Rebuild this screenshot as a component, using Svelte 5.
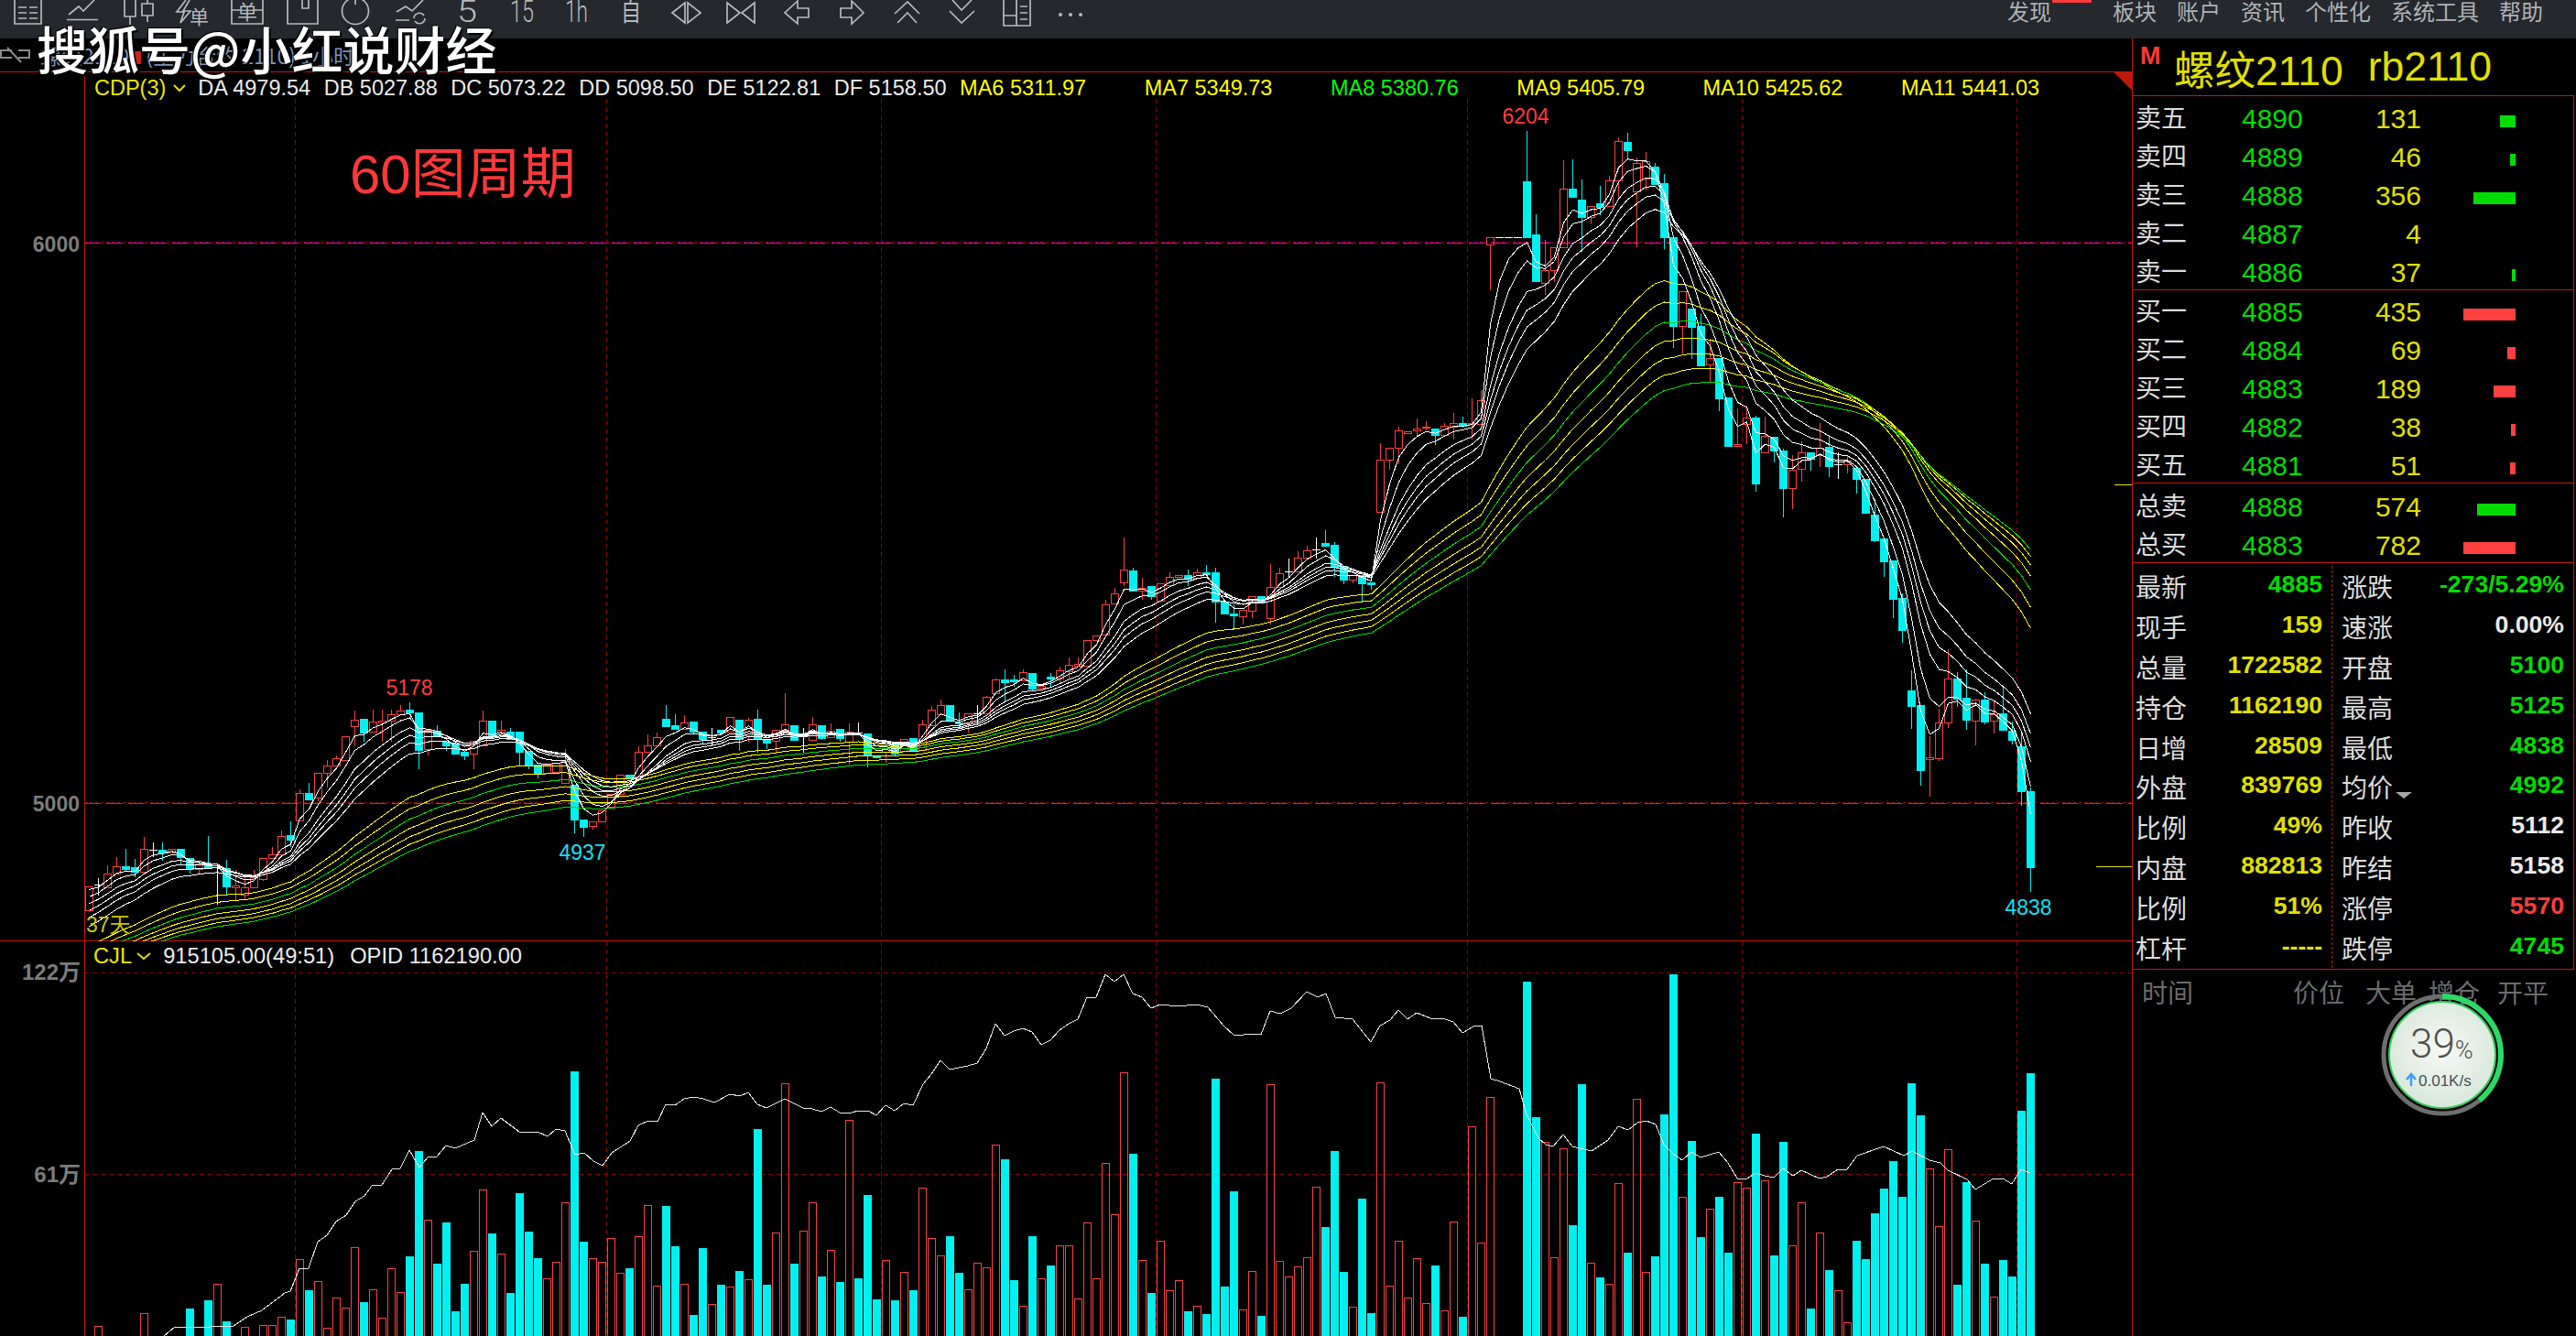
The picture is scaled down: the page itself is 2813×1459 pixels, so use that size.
<script>
  const R = 'r', C = 'c', W = 'w';

  // candles as pixel rows: [kind, bodyTop, bodyBottom, wickTop, wickBottom]
  const candles = [
    [R,968,994,0,996],[W,966,966,959,978],[R,954,969,945,970],[R,946,954,936],[C,946,949,927,952],[C,947,952,938,958],[R,927,952,914,955],[W,928,928,920,936],[C,928,931,920,940],[R,927,931],
    [C,927,936,0,945],[C,937,949,0,954],[R,943,949,0,955],[C,943,947,913],[W,947,947,945,988],[C,948,968,939,977],[R,967,969,950,983],[R,969,977,955,983],[R,958,969,950],[R,937,960,0,962],
    [R,933,937,925],[R,913,933,907],[C,912,917,897,925],[R,866,896,862],[C,866,873,855],[R,844,871,0,875],[R,836,844,830,860],[R,828,836,825],[R,804,830],[R,786,793,776,815],
    [C,785,800,0,810],[R,788,799,775],[R,787,789,775,810],[R,780,787,775,810],[R,776,780,770],[C,775,778,767],[C,778,819,0,840],[R,797,818,0,825],[C,798,804,792],[C,810,814,0,820],
    [C,812,823],[C,821,825,0,830],[R,809,823,0,840],[R,787,814,776],[C,787,804],[R,797,800,787],[C,799,807,795],[C,799,821,0,836],[C,820,835,0,840],[C,835,844,0,850],
    [R,835,844],[R,833,843],[R,831,855,818],[C,857,895,0,910],[C,895,903,0,914],[R,897,902,0,906],[R,885,897],[R,867,881],[R,846,867],[C,846,850],
    [R,821,848,815],[R,814,821,802],[R,805,814,800],[C,785,793,770],[C,792,796,780],[R,789,796,781],[C,788,799],[C,799,807,0,812],[W,805,805,795,815],[C,797,800],
    [R,783,799],[C,786,807,0,820],[R,786,803,784,810],[C,785,807,775,822],[C,807,811,0,818],[R,797,809,0,823],[R,791,797,757,800],[C,792,808],[W,803,803,795,822],[R,791,808,783],
    [C,792,806,0,808],[R,798,805,790],[C,796,806,0,810],[R,799,810,790,835],[W,800,800,789,802],[C,801,825,0,838],[C,826,827],[R,817,821,0,833],[C,813,823,0,826],[R,807,820],
    [C,806,820],[R,791,819,786],[R,775,792,771],[R,770,780,764],[C,770,787],[C,789,790,778,795],[R,779,790,0,800],[W,779,779,770,790],[R,761,779,760],[R,742,757,741],
    [C,742,745,731,767],[C,742,744,737,750],[R,734,743,731],[C,735,752,0,755],[R,749,751],[C,739,741,735,750],[R,732,741,728,745],[R,726,733,718,740],[R,725,727,718],[R,699,727],
    [R,694,699],[R,660,693,655],[R,648,659,642],[R,622,636,587,640],[C,623,645,620],[R,642,645,631,655],[C,640,651,0,655],[R,637,656],[R,630,639,625],[R,628,630],
    [C,628,632,622,640],[R,625,631,621],[C,625,627,617],[C,625,657,620,680],[C,657,670],[C,670,672,660,688],[R,666,673,0,682],[R,651,667,0,675],[C,651,658],[R,641,675,616,682],
    [R,626,641,620],[W,624,624,610,630],[R,609,624,602],[R,601,609,596],[W,600,600,587,610],[C,593,596,579],[C,595,619,592,630],[C,618,633,0,638],[R,628,633,0,637],[C,628,637,0,658],
    [C,636,638,0,644],[R,502,559,484],[R,489,502,0,513],[R,470,489,466,507],[R,471,473],[R,468,470,457,476],[R,466,467,460,470],[C,468,475,0,486],[R,465,475,462],[R,462,466,451,480],
    [C,462,465,455,467],[R,462,463,435,480],[R,437,463,427],[R,259,267,0,317],[W,259,259],[W,259,259],[W,259,259],[C,198,259,143],[C,256,307,234],[R,295,309,262,322],
    [R,270,295,0,308],[R,206,270,175],[C,206,215,174],[C,218,237,196,275],[R,225,237,0,245],[C,222,226,203,235],[R,197,225,192],[R,154,197,150,215],[C,155,164,145,175],[R,178,209,172,270],
    [R,176,195,166,208],[C,182,201,178],[C,200,259,190,272],[C,259,356,0,380],[R,318,356,0,386],[C,337,357,0,392],[C,356,399,343],[R,391,398,370,417],[C,391,435,0,449],[C,434,487],
    [R,485,487,446],[R,456,463,443,485],[C,456,528,454,537],[R,476,494,455],[C,477,492,0,505],[C,492,533,490,565],[R,513,533,497,556],[R,494,512,482,526],[C,494,501,0,514],[R,489,497,462,510],
    [C,488,509,475,521],[W,507,507,494,523],[R,503,507,498,517],[C,511,523,0,539],[C,523,560],[C,562,590,545,592],[C,588,613,0,630],[C,612,654,0,675],[C,653,688,648,702],[C,754,771,732,796],
    [C,770,841,0,858],[R,827,829,804,870],[R,789,828,774,831],[R,741,789,709,795],[C,741,763,734,772],[C,762,786,731,797],[R,764,787,763,814],[C,764,788,756,791],[R,780,787,765,801],[C,779,797,751],
    [C,798,808,788,813],[C,815,864,800,880],[C,864,947,860,974]
  ];

  // volume bar tops by index, 0 when the bar falls below the crop
  const volTops = [
    0,1448,0,0,0,0,1434,0,0,0,0,1429,0,1420,1402,1443,0,1449,0,1447,
    1447,1438,1441,1375,1409,1399,1450,1417,1428,1362,1422,1408,1439,1385,1411,1372,1257,1332,1380,1335,
    1432,1402,1366,1299,1347,1369,1412,1303,1345,1374,1396,1378,1313,1170,1356,1374,1378,1352,1390,1385,
    1350,1316,1404,1317,1361,1402,1436,1363,1424,1403,1405,1388,1397,1233,1403,1346,1183,1380,1344,1313,
    1394,1365,1400,1223,1396,1305,1419,1376,1420,1389,1409,1297,1352,1371,1350,1390,1408,1379,1384,1250,
    1266,1398,1426,1350,1396,1382,1360,1360,1418,1335,1396,1270,1326,1171,1260,1376,1412,1355,1409,1398,
    1432,1426,1435,1178,1405,1301,1430,1388,1437,1184,1377,1394,1383,1373,1296,1340,1257,1389,1427,1309,
    1434,1182,1404,1355,1417,1374,1423,1382,1431,1334,1438,1230,1357,1198,0,0,0,1072,1220,1247,
    1373,1254,1338,1184,1379,1395,1402,1292,1368,1200,1389,1372,1217,1064,1307,1246,1351,1320,1307,1368,
    1291,1297,1238,1289,1371,1247,1360,1313,1429,1346,1387,1409,1444,1355,1375,1325,1298,1268,1307,1183,
    1218,1276,1339,1255,1403,1291,1333,1380,1416,1376,1394,1213,1172
  ];
  // indexes of the hollow red volume bars
  const volRed = new Set([1,6,14,17,19,20,21,23,25,26,27,28,29,31,32,33,34,37,42,43,45,50,51,52,55,56,57,58,60,61,62,65,68,70,72,75,76,78,79,81,83,87,89,91,92,93,96,97,98,99,102,104,106,107,108,109,110,111,112,113,115,117,118,119,121,126,127,129,130,131,132,133,134,138,141,142,143,144,145,146,148,149,151,152,153,159,160,161,164,166,167,169,170,174,177,180,181,183,186,187,189,191,192,201,202,203,206,208]);

  const obv = [
    [179,1459],[191,1449],[204,1450],[255,1448],[270,1438],[286,1431],[311,1412],[317,1410],[327,1385],[337,1385],[347,1356],[357,1349],[367,1334],[378,1327],[388,1312],[398,1306],[406,1295],[417,1294],[428,1277],[437,1276],[447,1256],[458,1275],[467,1264],[477,1263],[487,1251],[497,1254],[518,1245],[527,1215],[537,1230],[547,1221],[567,1236],[587,1236],[598,1241],[607,1233],[617,1235],[628,1261],[638,1259],[648,1268],[658,1273],[668,1259],[688,1246],[697,1229],[708,1224],[718,1225],[727,1206],[737,1207],[747,1200],[758,1198],[768,1200],[780,1204],
    [797,1195],[808,1197],[817,1193],[827,1206],[837,1210],[857,1200],[877,1210],[887,1211],[897,1214],[907,1209],[917,1215],[930,1215],[937,1213],[948,1213],[957,1218],[967,1207],[977,1213],[987,1205],[997,1207],[1008,1184],[1017,1173],[1027,1158],[1037,1168],[1047,1166],[1057,1164],[1067,1161],[1077,1145],[1087,1118],[1097,1131],[1107,1126],[1117,1123],[1127,1127],[1137,1141],[1147,1136],[1157,1125],[1167,1118],[1177,1113],[1187,1089],[1197,1089],[1207,1064],[1217,1072],[1227,1064],[1237,1085],[1247,1089],[1257,1101],[1267,1097],
    [1286,1099],[1307,1097],[1319,1100],[1336,1120],[1348,1131],[1369,1129],[1377,1130],[1387,1104],[1398,1107],[1410,1101],[1427,1083],[1439,1089],[1448,1085],[1458,1111],[1477,1113],[1497,1138],[1507,1120],[1518,1114],[1527,1103],[1537,1113],[1547,1106],[1562,1112],[1578,1113],[1587,1116],[1597,1128],[1609,1121],[1618,1120],[1628,1178],[1638,1181],[1659,1189],[1667,1217],[1680,1243],[1688,1250],[1696,1252],[1707,1239],[1717,1252],[1738,1257],[1756,1245],[1767,1230],[1778,1234],[1788,1226],[1798,1224],[1808,1228],[1817,1250],[1827,1260],[1837,1267],[1847,1258],[1857,1264],[1877,1258],[1887,1270],[1897,1287],[1908,1287],[1917,1281],[1927,1284],[1937,1286],[1947,1276],[1958,1284],[1967,1278],[1987,1287],[1995,1285],[2007,1277],[2017,1277],[2028,1262],[2057,1252],[2079,1262],[2088,1257],[2107,1267],[2119,1270],[2127,1278],[2148,1288],[2157,1299],[2177,1287],[2187,1287],[2197,1293],[2207,1277],[2217,1281]
  ];

  const xAt = (k) => 97.5 + 10 * k;
  const closes = candles.map((c) => (c[0] === C ? c[2] : c[1]));

  function ema(period, seed) {
    const a = 2 / (period + 1);
    let v = seed;
    return closes.map((close, k) => {
      v += a * (close - v);
      return `${xAt(k)},${v.toFixed(1)}`;
    }).join(' ');
  }

  const fastLines = [[3,975],[5,985],[8,992],[10,1000],[12,1008],[15,1018]].map(([p, s]) => ema(p, s));
  const slowLines = [
    [30,1037,'#ffff00'],[35,1042,'#ffff00'],[40,1046,'#00e000'],[45,1049,'#ffff00'],
    [50,1052,'#ffff00'],[55,1054,'#ffff00'],[60,1056,'#00e000']
  ].map(([p, s, color]) => ({ points: ema(p, s), color }));

  const grid = [322, 662, 962, 1262, 1602, 1902, 2202];

  const legend = [
    ['DA', '4979.54'], ['DB', '5027.88'], ['DC', '5073.22'],
    ['DD', '5098.50'], ['DE', '5122.81'], ['DF', '5158.50']
  ];
  const maLegend = [
    ['MA6 5311.97', 'yel'], ['MA7 5349.73', 'yel'], ['MA8 5380.76', 'lime'],
    ['MA9 5405.79', 'yel'], ['MA10 5425.62', 'yel'], ['MA11 5441.03', 'yel']
  ];

  const menu = ['板块', '账户', '资讯', '个性化', '系统工具', '帮助'];

  const asks = [['卖五',4890,131],['卖四',4889,46],['卖三',4888,356],['卖二',4887,4],['卖一',4886,37]];
  const bids = [['买一',4885,435],['买二',4884,69],['买三',4883,189],['买四',4882,38],['买五',4881,51]];
  const totals = [['总卖',4888,574,'ask'],['总买',4883,782,'bid']];
  const barWidth = (qty) => Math.floor(qty * 0.132);

  const statsLeft = [
    ['最新','4885','grn'],['现手','159','ylw'],['总量','1722582','ylw'],['持仓','1162190','ylw'],['日增','28509','ylw'],
    ['外盘','839769','ylw'],['比例','49%','ylw'],['内盘','882813','ylw'],['比例','51%','ylw'],['杠杆','-----','ylw']
  ];
  const statsRight = [
    ['涨跌','-273/5.29%','grn'],['速涨','0.00%','wht'],['开盘','5100','grn'],['最高','5125','grn'],['最低','4838','grn'],
    ['均价','4992','grn',true],['昨收','5112','wht'],['昨结','5158','wht'],['涨停','5570','red'],['跌停','4745','grn']
  ];
</script>

<div class="app">
  <header class="toolbar">
    <svg class="tools" width="1200" height="42" viewBox="0 0 1200 42">
      <g class="tool-line">
        <path d="M16-2V26H45V-2M20 8h9M32 8h9M20 14h9M32 14h9M20 20h9M32 20h9" />
        <path d="M73 21.5H107M75 16L86 7L91 12L103 0" />
        <path d="M136-2H148V18H136ZM142 18V27M155 4H167V17H155ZM161 0V4M161 17V24" />
        <path d="M203 0L193 13H201L197 25L208 12H200L207 0" />
        <path d="M253-2V26H287V-2M253 11H262M278 11H287" />
        <path d="M314-2V26H347V-2M330-2V9H337V-2" />
        <circle cx="388" cy="12" r="14.5" />
        <path d="M388-2V5" />
        <path d="M433 13L443 7L450 12L462 0M432 22H447" />
        <path d="M452 20A6 6 0 0 1 463 17M464 20A6 6 0 0 1 453 23" />
        <path d="M734 14L748 3V25ZM765 14L751 3V25Z" />
        <path d="M794 3L808 14L794 25ZM824 3L810 14L824 25Z" />
        <path d="M871 1L857 14L871 26V19H883V9H871Z" />
        <path d="M930 1L943 14L930 26V19H918V9H930Z" />
        <path d="M977 15L991 2L1004 15M980 25L991 14L1001 25" />
        <path d="M1040 0L1050 11L1061 0M1037 12L1050 25L1064 12" />
        <path d="M1096-2H1125V28H1096ZM1110-2V28M1096 17H1110M1114 7H1122M1114 14H1122M1114 21H1122" />
      </g>
      <g class="tool-fill">
        <circle cx="1158" cy="16" r="2" /><circle cx="1169" cy="16" r="2" /><circle cx="1180" cy="16" r="2" />
      </g>
      <text class="tool-cjk" x="207" y="26" font-size="21">单</text>
      <text class="tool-cjk" x="259" y="21" font-size="22">单</text>
      <text class="tool-num" x="499" y="24" font-size="33" textLength="22" lengthAdjust="spacingAndGlyphs">5</text>
      <text class="tool-num" x="557" y="24" font-size="33" textLength="26" lengthAdjust="spacingAndGlyphs">15</text>
      <text class="tool-num" x="617" y="24" font-size="33" textLength="25" lengthAdjust="spacingAndGlyphs">1h</text>
      <text class="tool-cjk" x="678" y="23" font-size="27" textLength="22" lengthAdjust="spacingAndGlyphs">自</text>
    </svg>
    <nav class="menu">
      <span class="menu-flag">发现<i class="flag"></i></span>
      {#each menu as item}
        <span>{item}</span>
      {/each}
    </nav>
  </header>

  <div class="body">
    <main class="chart">
      <div class="strip">
        <svg width="34" height="20" viewBox="0 0 34 20" class="strip-icon">
          <path d="M13 5H1V13H13M20 5H32V13H20M8 2L23 18" />
        </svg>
        <span class="strip-title">螺纹2110 <i class="strip-tick"></i> (主力合约 2110) 1小时</span>
      </div>

      <section class="price-pane">
        <svg class="plot" width="2328" height="949" viewBox="0 79 2328 949">
          {#each grid as x}
            <line class="grid" x1={x + 0.5} x2={x + 0.5} y1="108" y2="1028" />
          {/each}
          <line class="grid-dot" x1="92" x2="2328" y1="264.5" y2="264.5" />
          <line class="grid-dot" x1="92" x2="2328" y1="876.5" y2="876.5" />
          <line class="magenta" x1="92" x2="2328" y1="265.5" y2="265.5" />
          <line class="magenta" x1="92" x2="2328" y1="877.5" y2="877.5" />
          <line class="axis" x1="92.5" x2="92.5" y1="79" y2="1028" />
          <line class="mark" x1="2309" x2="2328" y1="529.5" y2="529.5" />
          <line class="mark" x1="2289" x2="2328" y1="946.5" y2="946.5" />
          <polygon class="corner" points="2308,79 2328,79 2328,99" />

          {#each candles as [kind, top, bot, hi, lo], k}
            {@const x = xAt(k)}
            {#if kind === R}
              <g class="up">
                <line x1={x} x2={x} y1={hi || top} y2={top} />
                <line x1={x} x2={x} y1={bot} y2={lo || bot} />
                <rect x={x - 4} y={top + 0.5} width="8" height={bot - top} />
              </g>
            {:else if kind === C}
              <line class="down-wick" x1={x} x2={x} y1={hi || top} y2={lo || bot} />
              <rect class="down" x={x - 4.5} y={top} width="9" height={bot - top + 1} />
            {:else}
              <g class="doji">
                <line x1={x} x2={x} y1={hi || top} y2={lo || top} />
                <line x1={x - 4.5} x2={x + 4.5} y1={top + 0.5} y2={top + 0.5} />
              </g>
            {/if}
          {/each}

          {#each slowLines as line}
            <polyline class="ma" points={line.points} stroke={line.color} />
          {/each}
          {#each fastLines as points}
            <polyline class="ma fast" {points} />
          {/each}

          <text class="axis-label" x="87" y="275" text-anchor="end">6000</text>
          <text class="axis-label" x="87" y="885.5" text-anchor="end">5000</text>
          <text class="peak hot" x="1666" y="135">6204</text>
          <text class="peak hot" x="447" y="759">5178</text>
          <text class="peak cold" x="636" y="939">4937</text>
          <text class="peak cold" x="2215" y="999">4838</text>
          <text class="peak days" x="94" y="1018">37天</text>
          <text class="period" x="382" y="211">60图周期</text>
        </svg>

        <div class="legend">
          <span class="legend-name yel">CDP(3)</span>
          <svg class="chev" width="14" height="10" viewBox="0 0 14 10"><path d="M1 2L7 8L13 2" /></svg>
          {#each legend as [name, value]}
            <span class="legend-item">{name} {value}</span>
          {/each}
          {#each maLegend as [text, color]}
            <span class="legend-ma {color}">{text}</span>
          {/each}
        </div>
      </section>

      <section class="volume-pane">
        <svg class="plot" width="2328" height="431" viewBox="0 1028 2328 431">
          {#each grid as x}
            <line class="grid" x1={x + 0.5} x2={x + 0.5} y1="1028" y2="1459" />
          {/each}
          <line class="grid" x1="92" x2="2328" y1="1062.5" y2="1062.5" />
          <line class="grid" x1="92" x2="2328" y1="1282.5" y2="1282.5" />
          <line class="axis" x1="92.5" x2="92.5" y1="1028" y2="1459" />

          {#each volTops as top, k}
            {#if top}
              {#if volRed.has(k)}
                <rect class="vol-up" x={xAt(k) - 4} y={top + 0.5} width="8" height={1465 - top} />
              {:else}
                <rect class="down" x={xAt(k) - 4.5} y={top} width="9" height={1459 - top} />
              {/if}
            {/if}
          {/each}

          <polyline class="obv" points={obv.map((p) => p.join(',')).join(' ')} />

          <text class="axis-label small" x="88" y="1070" text-anchor="end">122万</text>
          <text class="axis-label small" x="88" y="1291" text-anchor="end">61万</text>
        </svg>

        <div class="legend vol-legend">
          <span class="legend-name yel">CJL</span>
          <svg class="chev" width="16" height="10" viewBox="0 0 16 10"><path d="M1 2L8 8L15 2" /></svg>
          <span class="legend-item first">915105.00(49:51)</span>
          <span class="legend-item">OPID 1162190.00</span>
        </div>
      </section>
    </main>

    <aside class="side">
      <div class="quote-title">
        <span class="m">M</span>
        <span>螺纹2110</span>
        <span>rb2110</span>
      </div>

      <div class="box">
        <div class="book first">
          {#each asks as [label, price, qty]}
            <div class="book-row">
              <span class="label">{label}</span><span class="price">{price}</span><span class="qty">{qty}</span>
              <span class="bar-cell"><i class="bar ask" style="width:{barWidth(qty)}px"></i></span>
            </div>
          {/each}
        </div>
        <div class="book">
          {#each bids as [label, price, qty]}
            <div class="book-row">
              <span class="label">{label}</span><span class="price">{price}</span><span class="qty">{qty}</span>
              <span class="bar-cell"><i class="bar bid" style="width:{barWidth(qty)}px"></i></span>
            </div>
          {/each}
        </div>
        <div class="book totals">
          {#each totals as [label, price, qty, side]}
            <div class="book-row">
              <span class="label">{label}</span><span class="price">{price}</span><span class="qty">{qty}</span>
              <span class="bar-cell"><i class="bar {side}" style="width:{qty * 0.0725}px"></i></span>
            </div>
          {/each}
        </div>

        <div class="stats">
          <div class="stat-col left">
            {#each statsLeft as [label, value, color]}
              <div class="stat-row"><span class="label">{label}</span><b class={color}>{value}</b></div>
            {/each}
          </div>
          <div class="stat-col">
            {#each statsRight as [label, value, color, caret]}
              <div class="stat-row">
                <span class="label">{label}{#if caret}<i class="caret"></i>{/if}</span><b class={color}>{value}</b>
              </div>
            {/each}
          </div>
        </div>
      </div>

      <div class="ticks">
        <div class="tick-head">
          <span class="t-time">时间</span><span class="t-price">价位</span><span class="t-big">大单</span><span class="t-add">增仓</span><span class="t-open">开平</span>
        </div>
        <svg class="speed" width="136" height="136" viewBox="0 0 136 136">
          <defs>
            <radialGradient id="face" cx="50%" cy="45%" r="55%">
              <stop offset="0%" stop-color="#f6f8f6" />
              <stop offset="100%" stop-color="#d9e8da" />
            </radialGradient>
          </defs>
          <circle cx="68" cy="68" r="64" class="speed-track" />
          <circle cx="68" cy="68" r="64" class="speed-arc" stroke-dasharray="157 402" transform="rotate(-90 68 68)" />
          <circle cx="68" cy="68" r="58" class="speed-face" fill="url(#face)" />
          <text class="speed-num" x="33" y="71">39<tspan font-size="27" dy="1">%</tspan></text>
          <path class="speed-up" d="M34 102V90M29 95L34 89L39 95" />
          <text class="speed-rate" x="42" y="102">0.01K/s</text>
        </svg>
      </div>
    </aside>
  </div>

  <div class="watermark">搜狐号@小红说财经</div>
</div>

<style>
  :global(body) {
    margin: 0;
    background: #000;
  }

  .app {
    position: relative;
    width: 2813px;
    height: 1459px;
    background: #000;
    overflow: hidden;
    display: flex;
    flex-direction: column;
    font-family: "Liberation Sans", "Noto Sans CJK SC", sans-serif;
  }

  i {
    display: inline-block;
    font-style: normal;
  }

  /* toolbar */
  .toolbar {
    height: 42px;
    flex-shrink: 0;
    background: #25282d;
    display: flex;
    justify-content: space-between;
    overflow: hidden;
  }

  .tools {
    display: block;
  }

  .tool-line path,
  .tool-line circle {
    fill: none;
    stroke: #b6babd;
    stroke-width: 1.7;
  }

  .tool-fill {
    fill: #b6babd;
  }

  .tool-cjk {
    font-family: "Noto Sans CJK SC", sans-serif;
    fill: #b6babd;
  }

  .tool-num {
    font-family: Roboto, sans-serif;
    font-weight: 300;
    fill: #b6babd;
  }

  .menu {
    display: flex;
    gap: 22px;
    padding-right: 36px;
    font: 24px/24px "Noto Sans CJK SC", sans-serif;
    color: #aeb2b6;
  }

  .menu-flag {
    position: relative;
    margin-right: 45px;
  }

  .flag {
    position: absolute;
    left: 49px;
    top: 0;
    width: 43px;
    height: 3px;
    background: #ff3a3a;
  }

  .body {
    flex: 1;
    display: flex;
    min-height: 0;
  }

  /* chart column */
  .chart {
    width: 2328px;
    flex-shrink: 0;
    display: flex;
    flex-direction: column;
  }

  .strip {
    height: 36px;
    flex-shrink: 0;
    display: flex;
    align-items: center;
    gap: 10px;
    border-bottom: 1.5px solid #c8160c;
  }

  .strip-icon path {
    fill: none;
    stroke: #8b8b8b;
    stroke-width: 2;
  }

  .strip-icon {
    flex-shrink: 0;
  }

  .strip-title {
    font: 23px "Noto Sans CJK SC", sans-serif;
    color: #7f93b4;
    white-space: nowrap;
  }

  .strip-tick {
    width: 8px;
    height: 14px;
    background: #d02020;
  }

  .price-pane,
  .volume-pane {
    position: relative;
  }

  .price-pane {
    height: 949px;
    border-bottom: 1.5px solid #c8160c;
    box-sizing: border-box;
    flex-shrink: 0;
  }

  .volume-pane {
    flex: 1;
    min-height: 0;
  }

  .plot {
    display: block;
    shape-rendering: crispEdges;
  }

  .grid {
    stroke: #8a0000;
    stroke-width: 1;
    stroke-dasharray: 5 4;
  }

  .grid-dot {
    stroke: #9a0000;
    stroke-width: 1;
    stroke-dasharray: 3 3;
  }

  .magenta {
    stroke: #e000e0;
    stroke-width: 1;
    stroke-dasharray: 18 6;
  }

  .axis {
    stroke: #c8160c;
    stroke-width: 1;
  }

  .mark {
    stroke: #e0e000;
    stroke-width: 1;
  }

  .corner {
    fill: #c01808;
  }

  .up line {
    stroke: #ff4040;
    stroke-width: 1;
  }

  .up rect,
  .vol-up {
    fill: none;
    stroke: #ff4040;
    stroke-width: 1;
  }

  .down-wick {
    stroke: #00f0f0;
    stroke-width: 1;
  }

  .down {
    fill: #00f0f0;
  }

  .doji line {
    stroke: #fff;
    stroke-width: 1;
  }

  .ma {
    fill: none;
    stroke-width: 1;
  }

  .fast {
    stroke: #fff;
  }

  .obv {
    fill: none;
    stroke: #e8e8e8;
    stroke-width: 1;
  }

  .axis-label {
    font: bold 23px "Liberation Sans", sans-serif;
    fill: #7c7c7c;
  }

  .axis-label.small {
    font: bold 24px "Liberation Sans", "Noto Sans CJK SC", sans-serif;
  }

  .peak {
    font: 23px "Liberation Sans", "Noto Sans CJK SC", sans-serif;
    text-anchor: middle;
  }

  .hot {
    fill: #ff3c3c;
  }

  .cold {
    fill: #12e0f4;
  }

  .days {
    fill: #c8c800;
    text-anchor: start;
  }

  .period {
    font: 60px "Liberation Sans", "Noto Sans CJK SC", sans-serif;
    fill: #ff3838;
  }

  .legend {
    position: absolute;
    left: 103px;
    top: -1px;
    height: 36px;
    display: flex;
    align-items: center;
    font-size: 23.5px;
    white-space: nowrap;
  }

  .vol-legend {
    left: 102px;
    top: -1px;
    height: 34px;
    font-size: 23.7px;
  }

  .legend-name {
    margin-right: 8px;
  }

  .vol-legend .legend-name {
    margin-right: 5px;
  }

  .chev {
    fill: none;
    stroke: #e0e000;
    stroke-width: 2;
    margin-right: 13px;
  }

  .legend-item {
    color: #ececec;
    margin-right: 14.5px;
  }

  .legend-item.first {
    margin-right: 17px;
  }

  .legend-ma {
    margin-right: 63.5px;
  }

  .yel {
    color: #e8e800;
  }

  .legend-ma.yel {
    color: #ffff00;
  }

  .lime {
    color: #00ff00;
  }

  /* quote panel */
  .side {
    width: 485px;
    flex-shrink: 0;
    box-sizing: border-box;
    display: flex;
    flex-direction: column;
    border-left: 1.5px solid #c8160c;
  }

  .quote-title {
    height: 62px;
    flex-shrink: 0;
    display: flex;
    align-items: center;
    gap: 27px;
    padding-left: 45px;
    position: relative;
    font-size: 44.5px;
    color: #e0e000;
  }

  .m {
    position: absolute;
    left: 8px;
    top: 4px;
    font-size: 27px;
    font-weight: bold;
    color: #ff3838;
  }

  .box {
    margin-right: 2px;
    border-top: 1.5px solid #c8160c;
    border-right: 1.5px solid #c8160c;
    flex-shrink: 0;
  }

  .book {
    border-bottom: 1.5px solid #c8160c;
  }

  .book.first {
    padding-top: 1px;
  }

  .book.totals {
    padding-top: 2px;
  }

  .book-row {
    height: 42px;
    display: grid;
    grid-template-columns: 116px 100px 96px 103px;
    align-items: center;
    padding-left: 3px;
  }

  .label {
    font: 28px/1 "Noto Sans CJK SC", sans-serif;
    color: #dcdcdc;
    white-space: nowrap;
  }

  .price {
    font-size: 30px;
    color: #00dc00;
    padding-top: 5px;
  }

  .qty {
    font-size: 30px;
    color: #e0e000;
    text-align: right;
    padding-top: 5px;
  }

  .bar-cell {
    display: flex;
    justify-content: flex-end;
    padding-top: 11px;
  }

  .bar {
    height: 13px;
  }

  .ask {
    background: #00dc00;
  }

  .bid {
    background: #ff4040;
  }

  .stats {
    height: 444px;
    display: flex;
    padding: 3px 0 1px;
    border-bottom: 1.5px solid #c8160c;
    box-sizing: border-box;
  }

  .stat-col {
    flex: 1;
    min-width: 0;
    display: flex;
    flex-direction: column;
    padding: 0 10px;
  }

  .stat-col.left {
    flex: 0 0 218px;
    box-sizing: border-box;
    padding: 0 10px 0 3px;
    border-right: 1.5px dashed #c8160c;
  }

  .stat-row {
    flex: 1;
    display: flex;
    justify-content: space-between;
    align-items: center;
  }

  .stat-row b {
    font-size: 26.6px;
    font-weight: bold;
    margin-top: -3px;
  }

  .grn {
    color: #00dc00;
  }

  .ylw {
    color: #e0e000;
  }

  .wht {
    color: #eaeaea;
  }

  .red {
    color: #ff3c3c;
  }

  .caret {
    width: 0;
    height: 0;
    margin-left: 3px;
    border-left: 9px solid transparent;
    border-right: 9px solid transparent;
    border-top: 7px solid #a8a8a8;
    vertical-align: -1px;
  }

  .ticks {
    position: relative;
    flex: 1;
    min-height: 0;
  }

  .tick-head {
    height: 48px;
    display: flex;
    align-items: center;
    font: 28px "Noto Sans CJK SC", sans-serif;
    color: #6c6c6c;
  }

  .t-time {
    margin-left: 10px;
  }

  .t-price {
    margin-left: 109px;
  }

  .t-big {
    margin-left: 23px;
  }

  .t-add {
    margin-left: 13px;
  }

  .t-open {
    margin-left: 19px;
  }

  .speed {
    position: absolute;
    left: 270px;
    top: 25px;
  }

  .speed-track,
  .speed-arc {
    fill: none;
    stroke-width: 5;
  }

  .speed-track {
    stroke: #6e6e6e;
  }

  .speed-arc {
    stroke: #2ed866;
    stroke-width: 6;
  }

  .speed-face {
    stroke: #2fce5c;
    stroke-width: 2;
  }

  .speed-num {
    font: 300 44px Roboto, sans-serif;
    fill: #505050;
  }

  .speed-rate {
    font: 17px "Liberation Sans", sans-serif;
    fill: #3f5060;
  }

  .speed-up {
    fill: none;
    stroke: #3a9eff;
    stroke-width: 2.5;
  }

  .watermark {
    position: absolute;
    left: 40px;
    top: 17px;
    font: 500 56px/70px "Noto Sans CJK SC", sans-serif;
    color: #fff;
    text-shadow: 2px 2px 1px #000, -1px -1px 1px #000;
    white-space: nowrap;
  }
</style>
